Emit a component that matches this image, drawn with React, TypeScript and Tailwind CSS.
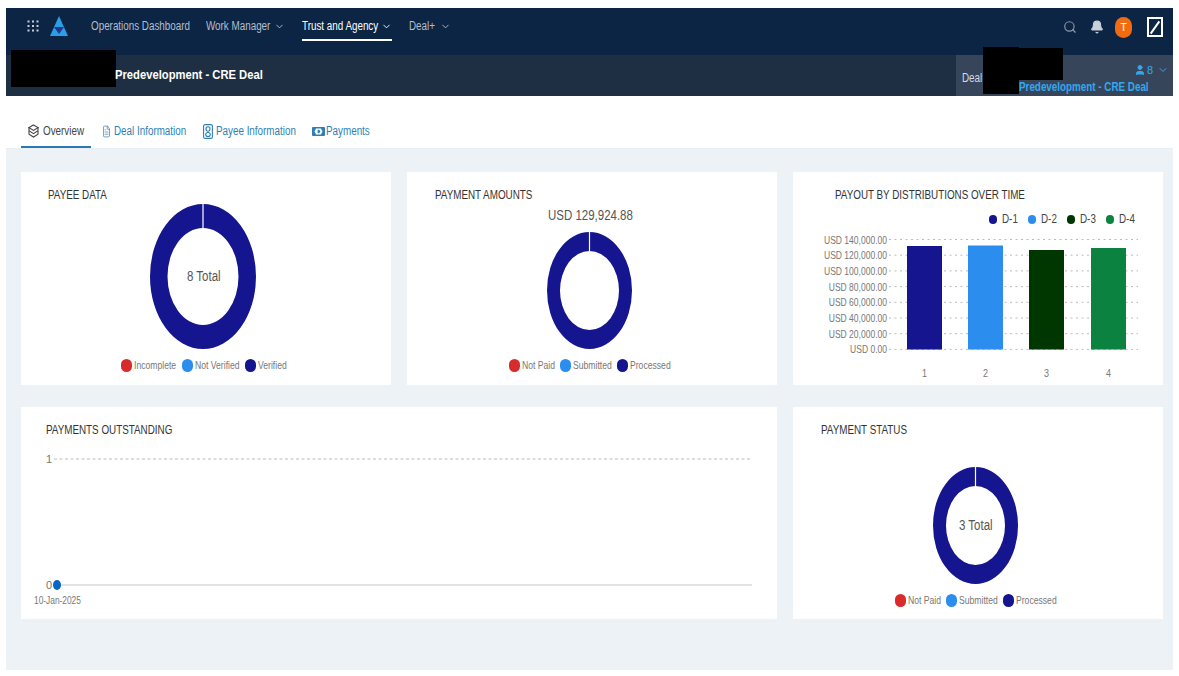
import React from 'react';
import { ChevronDown, Search, Bell, User, FileText } from 'lucide-react';

// the screenshot is squeezed sideways, so text gets a fixed box and a horizontal scale
const N: React.FC<{ w: string; children: React.ReactNode; className?: string }> = ({ w, children, className = '' }) => (
  <span className={`inline-block shrink-0 origin-left scale-x-[0.82] whitespace-nowrap ${w} ${className}`}>{children}</span>
);

const OverviewIcon = () => (
  <svg width="11" height="14" viewBox="0 0 11 14" fill="none" stroke="currentColor" strokeWidth="1.1" className="shrink-0">
    <path d="M5.5 1L10 3.6 5.5 6.4 1 3.6z" />
    <path d="M1 3.6v3.2l4.5 2.8 4.5-2.8V3.6" />
    <path d="M1 7v3.2L5.5 13l4.5-2.8V7" />
  </svg>
);

const DealIcon = () => <FileText size={13} strokeWidth={1.5} className="w-[9px] shrink-0" preserveAspectRatio="none" />;

const PayeeIcon = () => (
  <svg width="10" height="15" viewBox="0 0 10 15" fill="none" stroke="currentColor" strokeWidth="1.1" className="shrink-0">
    <rect x="0.6" y="0.6" width="8.8" height="13.8" rx="1.5" />
    <ellipse cx="5" cy="5" rx="2" ry="2.2" />
    <ellipse cx="5" cy="10.5" rx="2.3" ry="2" />
  </svg>
);

const PaymentsIcon = () => (
  <svg width="13" height="9" viewBox="0 0 13 9" className="shrink-0">
    <rect width="13" height="9" rx="1" fill="currentColor" />
    <path d="M4 1.6h5l1.4 2.9L9 7.4H4L2.6 4.5z" fill="#fff" />
    <path d="M5.6 2.8h1.8l.8 1.7-.8 1.7H5.6z" fill="currentColor" />
  </svg>
);

const tabs = [
  { label: 'Overview', Icon: OverviewIcon, tw: 'w-[41px]', w: 'w-[70px]', gap: 'gap-[4px]', ml: 'ml-0', active: true },
  { label: 'Deal Information', Icon: DealIcon, tw: 'w-[72px]', w: 'w-[84px]', gap: 'gap-[3px]', ml: 'ml-[11px]' },
  { label: 'Payee Information', Icon: PayeeIcon, tw: 'w-[80px]', w: 'w-[93px]', gap: 'gap-[3px]', ml: 'ml-[17px]' },
  { label: 'Payments', Icon: PaymentsIcon, tw: 'w-[44px]', w: 'w-[58px]', gap: 'gap-[1px]', ml: 'ml-[16px]' },
];

const Donut: React.FC<{ rx: number; ry: number; irx: number; iry: number; label?: string }> = ({ rx, ry, irx, iry, label }) => (
  <div className="relative" style={{ width: rx * 2, height: ry * 2 }}>
    <svg width={rx * 2} height={ry * 2} viewBox={`0 0 ${rx * 2} ${ry * 2}`}>
      <path
        fillRule="evenodd"
        fill="#15158f"
        d={`M0 ${ry}a${rx} ${ry} 0 1 0 ${rx * 2} 0a${rx} ${ry} 0 1 0 ${-rx * 2} 0zM${rx - irx} ${ry}a${irx} ${iry} 0 1 0 ${irx * 2} 0a${irx} ${iry} 0 1 0 ${-irx * 2} 0z`}
      />
      <line x1={rx} y1={0} x2={rx} y2={ry - iry} stroke="#fff" strokeWidth="1.2" />
    </svg>
    {label && (
      <div className="absolute inset-0 flex items-center justify-center text-[14px] text-[#555]">
        <N w="w-[33px]">{label}</N>
      </div>
    )}
  </div>
);

const Legend: React.FC<{ items: [string, string, string][] }> = ({ items }) => (
  <div className="flex items-center justify-center gap-[6px] text-[10.5px] leading-[14px] text-[#777]">
    {items.map(([name, color, w]) => (
      <div key={name} className="flex items-center gap-[2px]">
        <span className="h-[13px] w-[11px] rounded-full" style={{ background: color }} />
        <N w={w}>{name}</N>
      </div>
    ))}
  </div>
);

const Title: React.FC<{ w: string; children: React.ReactNode }> = ({ w, children }) => (
  <h2 className="text-[12px] leading-[14px] text-[#333]"><N w={w}>{children}</N></h2>
);

const statusLegend: [string, string, string][] = [
  ['Not Paid', '#d92b2b', 'w-[32px]'],
  ['Submitted', '#2b8eef', 'w-[38px]'],
  ['Processed', '#15158f', 'w-[40px]'],
];

const BarChart = () => {
  const labels = ['140,000.00', '120,000.00', '100,000.00', '80,000.00', '60,000.00', '40,000.00', '20,000.00', '0.00'];
  const bars = [
    { x: 114, top: 76, c: '#15158f' },
    { x: 175, top: 75.5, c: '#2b8eef' },
    { x: 236, top: 80, c: '#003600' },
    { x: 298, top: 78, c: '#0c8240' },
  ];
  return (
    <svg width="370" height="150" viewBox="0 63 370 150" className="mt-[7px]">
      {labels.map((l, i) => {
        const y = 69.5 + i * 15.7;
        return (
          <g key={l}>
            <text transform={`translate(94 ${y + 4}) scale(0.82 1)`} textAnchor="end" fontSize="10.4" fill="#777">USD {l}</text>
            <line x1="96" x2="345" y1={y} y2={y} stroke="#bbb" strokeWidth="1" strokeDasharray="2 3.5" />
          </g>
        );
      })}
      {bars.map((b, i) => (
        <g key={b.x}>
          <rect x={b.x} y={b.top} width="35" height={179.5 - b.top} fill={b.c} />
          <text transform={`translate(${b.x + 17.5} 207) scale(0.82 1)`} textAnchor="middle" fontSize="11" fill="#777">{i + 1}</text>
        </g>
      ))}
    </svg>
  );
};

const LineChart = () => (
  <svg width="755" height="158" viewBox="0 0 755 158">
    <text x="25" y="26" fontSize="11" fill="#777">1</text>
    <line x1="33" x2="731" y1="22" y2="22" stroke="#bbb" strokeDasharray="3 2.5" />
    <text x="25" y="152" fontSize="11" fill="#777">0</text>
    <line x1="33" x2="731" y1="148" y2="148" stroke="#d8d8d8" strokeWidth="1.5" />
    <ellipse cx="36" cy="148" rx="4" ry="5" fill="#0a66c2" />
  </svg>
);

export default function App() {
  return (
    <div className='h-[676px] w-[1179px] overflow-hidden bg-white px-[6px] pb-[6px] pt-2 [font-family:"Liberation_Sans",Arial,sans-serif]'>
      <div className="flex h-full flex-col">
        {/* top nav */}
        <header className="flex h-[47px] items-center bg-[#0c2545] pb-[11px] pl-[20px] pr-[10px] text-[12px] text-[#b4bfcc]">
          <svg width="12" height="12" viewBox="0 0 12 12" fill="#c5ced8" className="ml-[1px]">
            {[1.5, 6, 10.5].flatMap(x => [1.5, 6, 10.5].map(y => <rect key={`${x}-${y}`} x={x - 1} y={y - 1} width="2" height="2" />))}
          </svg>
          <svg width="18" height="20" viewBox="0 0 18 20" className="ml-[11px]">
            <path d="M9 0L18 20H0z" fill="#2a9fe6" />
            <path d="M4 11h10l-5 7z" fill="#24348f" />
          </svg>
          <N w="w-[98px]" className="ml-[23px]">Operations Dashboard</N>
          <N w="w-[64px]" className="ml-[17px]">Work Manager</N>
          <ChevronDown size={11} className="ml-[4px]" />
          <div className="relative ml-[17px] flex h-full items-center text-white">
            <N w="w-[75px]">Trust and Agency</N>
            <ChevronDown size={11} className="ml-[4px]" />
            <div className="absolute inset-x-0 bottom-[3px] h-[2px] bg-white" />
          </div>
          <N w="w-[25px]" className="ml-[17px]">Deal+</N>
          <ChevronDown size={11} className="ml-[6px]" />
          <div className="ml-auto flex translate-y-[1px] items-center">
            <Search size={14} className="text-[#8d99a8]" />
            <Bell size={14} className="ml-[13px] fill-[#c8d0da] text-[#c8d0da]" />
            <div className="ml-[11px] flex h-[21px] w-[17px] items-center justify-center rounded-full bg-[#f26b0f] text-[11px] text-white">T</div>
            <div className="ml-[15px] flex h-[20px] w-[16px] items-center justify-center border-2 border-white">
              <div className="h-[15px] w-[2px] rotate-[35deg] bg-white" />
            </div>
          </div>
        </header>

        {/* deal bar */}
        <div className="relative flex h-[41px] items-center justify-between bg-[#1f2f43]">
          <div className="absolute left-[5px] top-[-5px] h-[37px] w-[105px] bg-black" />
          <N w="w-[147px]" className="ml-[109px] text-[13.7px] font-bold text-white">Predevelopment - CRE Deal</N>
          <div className="relative flex h-full w-[217px] items-start bg-[#36455a] pl-[6px]">
            <div className="absolute left-[27px] top-[-8px] h-[47px] w-[36px] bg-black" />
            <div className="absolute left-[63px] top-[-7px] h-[32px] w-[44px] bg-black" />
            <N w="w-[20px]" className="mt-[16px] text-[12px] leading-[14px] text-[#d5dbe2]">Deal</N>
            <div className="ml-[37px] flex-1">
              <div className="flex items-center justify-end pr-[4px] pt-[8px] text-[11px] leading-[14px] text-[#33a8f0]">
                <User size={12} className="fill-[#33a8f0]" />
                <span className="ml-[1px]">8</span>
                <ChevronDown size={12} className="ml-[4px]" />
              </div>
              <div className="mt-[3px] flex text-[12px] font-bold leading-[14px] text-[#33a8f0]">
                <N w="w-[129px]">Predevelopment - CRE Deal</N>
              </div>
            </div>
          </div>
        </div>

        {/* tabs */}
        <nav className="flex h-[53px] items-end border-b border-[#e8edf2] pl-[15px] text-[12px] text-[#2f7fb5]">
          {tabs.map(({ label, Icon, tw, w, gap, ml, active }) => (
            <div
              key={label}
              className={`flex h-[37px] items-center justify-center pt-[5px] ${gap} ${w} ${ml} ${active ? 'border-b-2 border-[#2a7ab0] text-[#444]' : 'border-b-2 border-transparent'}`}
            >
              <Icon />
              <N w={tw}>{label}</N>
            </div>
          ))}
        </nav>

        {/* cards */}
        <main className="flex-1 bg-[#edf2f7] pl-[15px] pr-[10px] pt-[23px]">
          <div className="grid grid-cols-[370px_370px_370px] grid-rows-[213px_212px] gap-x-[16px] gap-y-[22px]">
            <section className="bg-white">
              <div className="pl-[27px] pt-[16px]"><Title w="w-[59px]">PAYEE DATA</Title></div>
              <div className="flex flex-col items-center pr-[6px]">
                <div className="mt-[2px]"><Donut rx={53} ry={72.5} irx={35.5} iry={48.5} label="8 Total" /></div>
                <div className="mt-[9px]">
                  <Legend items={[['Incomplete', '#d92b2b', 'w-[42px]'], ['Not Verified', '#2b8eef', 'w-[44px]'], ['Verified', '#15158f', 'w-[28px]']]} />
                </div>
              </div>
            </section>
            <section className="bg-white">
              <div className="pl-[28px] pt-[16px]"><Title w="w-[97px]">PAYMENT AMOUNTS</Title></div>
              <div className="flex flex-col items-center pr-[6px]">
                <N w="w-[83px]" className="mt-[5px] text-[14px] leading-[16px] text-[#555]">USD 129,924.88</N>
                <div className="mt-[9px]"><Donut rx={42.5} ry={58.5} irx={29.5} iry={39.5} /></div>
                <div className="mt-[9px]"><Legend items={statusLegend} /></div>
              </div>
            </section>
            <section className="bg-white">
              <div className="pl-[42px] pt-[16px]"><Title w="w-[189px]">PAYOUT BY DISTRIBUTIONS OVER TIME</Title></div>
              <div className="mt-[10px] flex justify-end gap-[10px] pr-[28px] text-[12px] leading-[14px] text-[#444]">
                {[['D-1', '#15158f'], ['D-2', '#2b8eef'], ['D-3', '#003600'], ['D-4', '#0c8240']].map(([n, c]) => (
                  <div key={n} className="flex items-center gap-[5px]">
                    <span className="h-[9px] w-[8px] rounded-full" style={{ background: c }} />
                    <N w="w-[16px]">{n}</N>
                  </div>
                ))}
              </div>
              <BarChart />
            </section>
            <section className="col-span-2 bg-white">
              <div className="pl-[25px] pt-[16px]"><Title w="w-[125px]">PAYMENTS OUTSTANDING</Title></div>
              <LineChart />
              <div className="pl-[13px] text-[10.2px] leading-[12px] text-[#777]"><N w="w-[47px]">10-Jan-2025</N></div>
            </section>
            <section className="bg-white">
              <div className="pl-[28px] pt-[16px]"><Title w="w-[85px]">PAYMENT STATUS</Title></div>
              <div className="flex flex-col items-center pr-[6px]">
                <div className="mt-[30px]"><Donut rx={42.5} ry={58.5} irx={29.5} iry={39.5} label="3 Total" /></div>
                <div className="mt-[9px]"><Legend items={statusLegend} /></div>
              </div>
            </section>
          </div>
        </main>
      </div>
    </div>
  );
}
